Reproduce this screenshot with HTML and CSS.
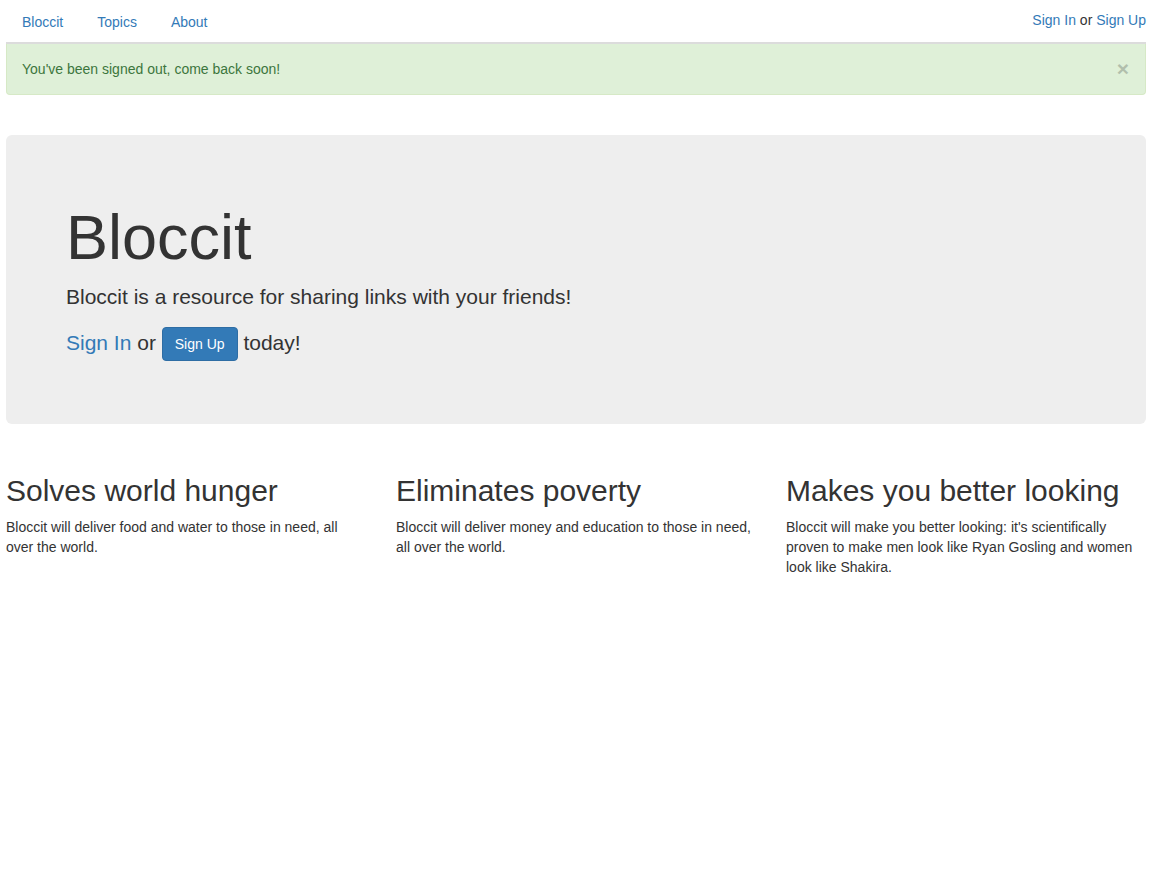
FILE: index.html
```html
<!DOCTYPE html>
<html>
<head>
<meta charset="utf-8">
<link rel="stylesheet" href="styles.css">
<title>Bloccit</title>
</head>
<body>
<div class="container">
  <div class="topbar">
    <ul class="nav">
      <li><a href="#">Bloccit</a></li>
      <li><a href="#">Topics</a></li>
      <li><a href="#">About</a></li>
    </ul>
    <div class="user-info"><a href="#">Sign In</a> or <a href="#">Sign Up</a></div>
  </div>
  <div class="rule"></div>
  <div class="alert">
    <span>You've been signed out, come back soon!</span>
    <button class="close" type="button">&times;</button>
  </div>
  <div class="jumbotron">
    <h1>Bloccit</h1>
    <p>Bloccit is a resource for sharing links with your friends!</p>
    <p><a href="#">Sign In</a> or <a class="btn" href="#">Sign Up</a> today!</p>
  </div>
  <div class="row">
    <div class="col">
      <h2>Solves world hunger</h2>
      <p>Bloccit will deliver food and water to those in need, all over the world.</p>
    </div>
    <div class="col">
      <h2>Eliminates poverty</h2>
      <p>Bloccit will deliver money and education to those in need, all over the world.</p>
    </div>
    <div class="col">
      <h2>Makes you better looking</h2>
      <p>Bloccit will make you better looking: it's scientifically proven to make men look like Ryan Gosling and women look like Shakira.</p>
    </div>
  </div>
</div>
</body>
</html>
```
FILE: styles.css
```css
* { box-sizing: border-box; }
html, body { margin: 0; padding: 0; background: #fff; }
body {
  font-family: "Liberation Sans", Arial, Helvetica, sans-serif;
  font-size: 14px;
  line-height: 1.42857143;
  color: #333;
}
a { color: #337ab7; text-decoration: none; }
.container {
  width: 1140px;
  margin-left: 6px;
}
.topbar {
  display: flex;
  justify-content: space-between;
  align-items: flex-start;
  height: 42px;
}
.nav {
  list-style: none;
  margin: 2px 0 0 1px;
  padding: 0;
  display: flex;
}
.nav li + li { margin-left: 4px; }
.nav a {
  display: block;
  padding: 10px 15px;
  line-height: 20px;
}
.user-info {
  padding-top: 10px;
  line-height: 20px;
}
.rule {
  height: 2px;
  background: #dcdcdc;
}
.alert {
  display: flex;
  justify-content: space-between;
  align-items: center;
  padding: 14px 15px 15px 15px;
  line-height: 20px;
  background: #dff0d8;
  border: 1px solid #d6e9c6;
  border-top: none;
  border-radius: 0 0 4px 4px;
  color: #3c763d;
  margin-bottom: 40px;
}
.close {
  background: none;
  border: 0;
  padding: 0;
  margin-right: 1px;
  font-family: inherit;
  font-size: 21px;
  font-weight: bold;
  line-height: 1;
  color: #000;
  opacity: .2;
  cursor: pointer;
}
.jumbotron {
  background: #eee;
  border-radius: 6px;
  padding: 48px 60px 48px 60px;
  margin-bottom: 30px;
}
.jumbotron h1 {
  font-size: 63px;
  font-weight: 500;
  line-height: 1.1;
  margin: 20px 0 10px;
}
.jumbotron p {
  font-size: 21px;
  font-weight: 200;
  margin: 0 0 15px;
}
.btn {
  display: inline-block;
  padding: 6px 12px;
  font-size: 14px;
  line-height: 20px;
  color: #fff;
  background: #337ab7;
  border: 1px solid #2e6da4;
  border-radius: 4px;
  vertical-align: middle;
}
.row {
  display: flex;
}
.col {
  width: 390px;
  padding-right: 30px;
}
.col:last-child { width: 360px; padding-right: 0; }
.col h2 {
  font-size: 30px;
  font-weight: 500;
  line-height: 1.1;
  margin: 20px 0 10px;
}
.col p { margin: 0 0 10px; }
```
